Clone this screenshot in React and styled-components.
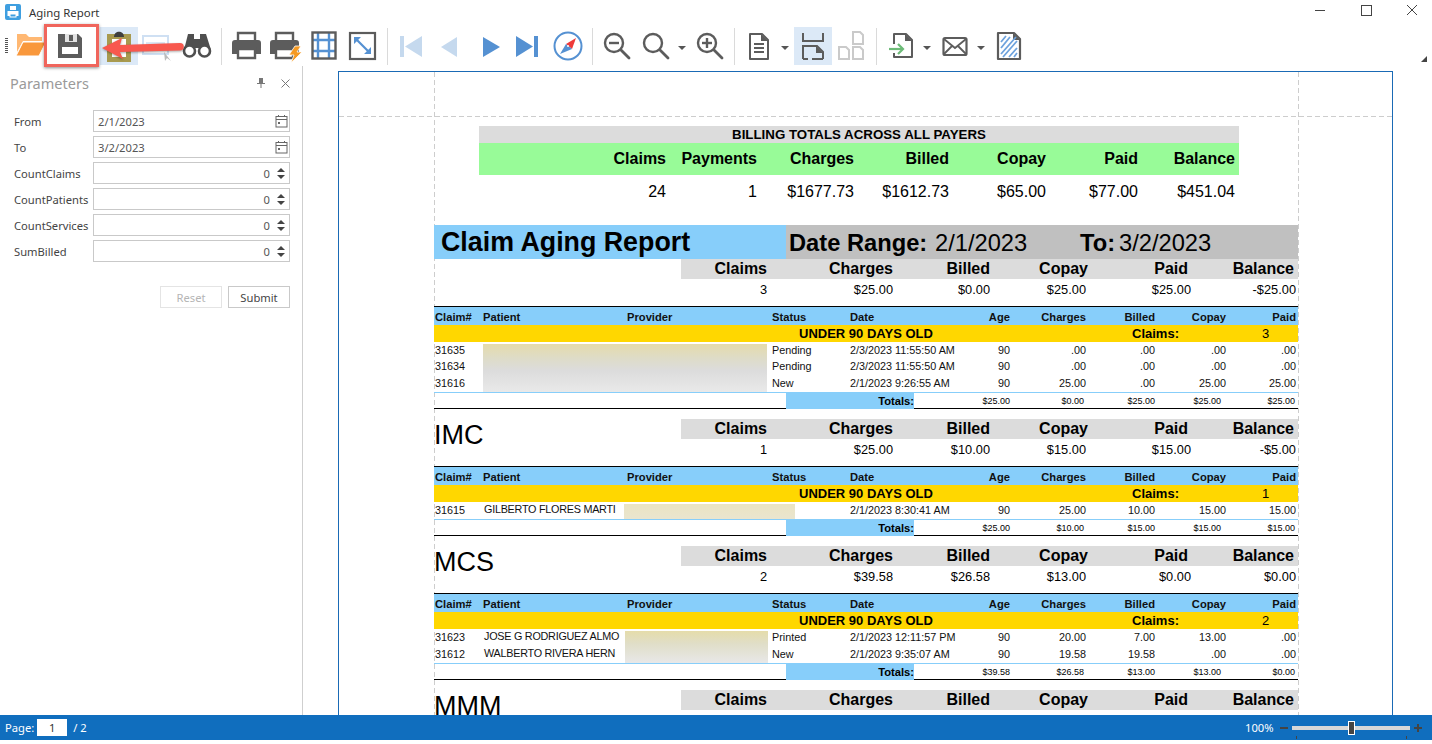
import React from "react";
import styled, { createGlobalStyle, css } from "styled-components";

const GlobalStyle = createGlobalStyle`
  html, body {
    margin: 0;
    padding: 0;
    background: #fff;
    overflow: hidden;
  }
`;

const uiFont = `"Noto Sans", "Open Sans", sans-serif`;
const reportFont = `"Liberation Sans", Arial, sans-serif`;
const dark = "#5c5c5c";
const blue = "#5591d2";
const paleBlue = "#c5d9ee";

const Window = styled.div`
  width: 1432px;
  height: 740px;
  display: flex;
  flex-direction: column;
  font-family: ${uiFont};
  overflow: hidden;
`;

/* title bar */
const TitleBar = styled.div`
  height: 24px;
  display: flex;
  align-items: center;
  padding-left: 5px;
  gap: 8px;
  flex: none;
`;
const TitleText = styled.span`
  font-size: 11.4px;
  color: #333;
`;
const WindowButtons = styled.div`
  margin: 0 -3px 4px auto;
  display: flex;
`;
const WindowButton = styled.div`
  width: 46px;
  height: 20px;
  display: flex;
  align-items: center;
  justify-content: center;
`;

/* toolbar */
const Toolbar = styled.div`
  position: relative;
  height: 42px;
  flex: none;
  display: flex;
  align-items: flex-start;
  padding: 3px 0 0 5px;
  box-sizing: border-box;
`;
const Grip = styled.div`
  width: 3px;
  height: 15px;
  margin-top: 11px;
  background: repeating-linear-gradient(#555 0 1px, #fff 1px 2px);
`;
const ToolButton = styled.div`
  flex: none;
  width: ${(p) => p.$w || 38}px;
  height: 38px;
  margin-left: ${(p) => p.$ml || 0}px;
  display: flex;
  align-items: center;
  justify-content: center;
  position: relative;
  z-index: 1;
  background: ${(p) => (p.$on ? "#dce9f7" : "transparent")};

  svg {
    overflow: visible;
  }
`;
const Separator = styled.div`
  flex: none;
  width: 1px;
  height: 37px;
  margin: 1px 0 0 ${(p) => p.$ml || 0}px;
  background: #dadada;
`;
const Caret = styled.div`
  flex: none;
  width: 0;
  height: 0;
  margin: 19px 2px 0 ${(p) => p.$ml || 0}px;
  border-left: 4px solid transparent;
  border-right: 4px solid transparent;
  border-top: 4px solid #555;
`;
const RedBox = styled.div`
  position: absolute;
  left: 44px;
  top: 0;
  width: 55px;
  height: 43px;
  box-sizing: border-box;
  border: 3px solid #f0655c;
  box-shadow: 0 1px 3px rgba(0, 0, 0, 0.45);
  z-index: 2;
`;
const SaveOverlay = styled.div`
  position: absolute;
  left: 51px;
  top: 3px;
  z-index: 3;
  width: 38px;
  height: 38px;
  display: flex;
  align-items: center;
  justify-content: center;
`;
const ArrowOverlay = styled.svg`
  position: absolute;
  left: 100px;
  top: 12px;
  z-index: 4;
  filter: drop-shadow(0 1px 1px rgba(0, 0, 0, 0.35));
`;
const OverflowMark = styled.div`
  position: absolute;
  right: 5px;
  top: 32px;
  width: 0;
  height: 0;
  border-left: 6px solid transparent;
  border-bottom: 6px solid #444;
`;

const Ico = ({ children }) => (
  <svg width="32" height="32" viewBox="0 0 32 32" fill="none">
    {children}
  </svg>
);

const FolderIcon = () => (
  <Ico>
    <path d="M2 16V4h9l3 3h13v4H8L2 22z" fill="#ffb873" />
    <path d="M8 12h23l-7 14H1z" fill="#f9983c" stroke="#fff" strokeWidth="1" />
  </Ico>
);
const SaveIcon = () => (
  <Ico>
    <path d="M4 4h20l4 4v20H4z" fill={dark} />
    <rect x="11" y="4" width="12" height="8" fill="#e2e2e2" />
    <rect x="15" y="5" width="4" height="6" fill={dark} />
    <rect x="8" y="17" width="16" height="7" fill="#fff" />
  </Ico>
);
const ClipboardIcon = () => (
  <Ico>
    <rect x="6.500" y="6.500" width="19" height="23" fill="#fff" stroke="#a89a50" strokeWidth="5" />
    <path d="M11 7c0-7 10-7 10 0z" fill="#3f3f3f" />
  </Ico>
);
const RectCursorIcon = () => (
  <Ico>
    <rect x="4" y="6" width="25" height="18" fill="#fff" stroke="#cfe0f3" strokeWidth="2" />
    <rect x="7" y="12" width="19" height="3" fill="#dce8f5" />
    <path d="M25 22l1 9 2-3 4 3z" fill="#bbb" />
  </Ico>
);
const BinocularsIcon = () => (
  <Ico>
    <path d="M7 4h6v16H3zM19 4h6l5 16H19z" fill="#4f4f4f" />
    <rect x="12" y="9" width="8" height="9" fill="#4f4f4f" />
    <circle cx="8.500" cy="21" r="5.500" fill="#fff" stroke="#4f4f4f" strokeWidth="2.600" />
    <circle cx="23.500" cy="21" r="5.500" fill="#fff" stroke="#4f4f4f" strokeWidth="2.600" />
  </Ico>
);
const PrintIcon = ({ bolt }) => (
  <Ico>
    <path d="M8 11V3h17v8" stroke={dark} strokeWidth="2.400" />
    <path d="M5 10h23a3 3 0 0 1 3 3v11h-5v-6H7v6H2V13a3 3 0 0 1 3-3z" fill={dark} />
    <path d="M8 19h17v9H8z" stroke={dark} strokeWidth="2.400" fill="#fff" />
    {bolt && <path d="M27 16h6l-4 6h5L23 33l3-8h-5z" fill="#f59a23" stroke="#fff" strokeWidth="0.800" />}
  </Ico>
);
const GridIcon = () => (
  <Ico>
    <path d="M10 3v26M21 3v26M5 10h22M5 21h22" stroke={blue} strokeWidth="2.400" />
    <rect x="4.500" y="2.500" width="23" height="26" stroke={dark} strokeWidth="2.400" />
  </Ico>
);
const FitIcon = () => (
  <Ico>
    <rect x="4" y="3" width="25" height="26" stroke={dark} strokeWidth="2.200" />
    <path d="M9 8l15 15" stroke={blue} strokeWidth="2.200" />
    <path d="M8 7h7l-7 7zM25 24h-7l7-7z" fill={blue} />
  </Ico>
);
const FirstIcon = () => (
  <Ico>
    <rect x="5" y="6" width="4" height="21" fill={paleBlue} />
    <path d="M27 6v21L10 16.500z" fill={paleBlue} />
  </Ico>
);
const PrevIcon = () => (
  <Ico>
    <path d="M24 7v20L8 17z" fill={paleBlue} />
  </Ico>
);
const NextIcon = () => (
  <Ico>
    <path d="M8 7v20l17-10z" fill={blue} />
  </Ico>
);
const LastIcon = () => (
  <Ico>
    <path d="M4 6v21l17-10.500z" fill={blue} />
    <rect x="22" y="6" width="4" height="21" fill={blue} />
  </Ico>
);
const CompassIcon = () => (
  <Ico>
    <circle cx="16" cy="16" r="13.500" stroke={blue} strokeWidth="2" fill="#fff" />
    <path d="M24 8l-4 11-6-5z" fill="#ee3a3a" />
    <path d="M8 24l6-10 6 5z" fill={blue} />
    <circle cx="16" cy="16" r="1" fill="#fff" />
  </Ico>
);
const MagnifierIcon = ({ mark }) => (
  <Ico>
    <circle cx="13" cy="13" r="9" stroke={dark} strokeWidth="2.400" />
    <path d="M20 20l8 8" stroke={dark} strokeWidth="2.800" strokeLinecap="round" />
    {mark && <path d="M8 13h10" stroke={dark} strokeWidth="2.400" />}
    {mark === "plus" && <path d="M13 8v10" stroke={dark} strokeWidth="2.400" />}
  </Ico>
);
const DocIcon = () => (
  <Ico>
    <path d="M7 4h12l6 6v19H7z" stroke={dark} strokeWidth="2" strokeLinejoin="round" />
    <path d="M18 4v7h7z" fill={dark} />
    <path d="M11 14h10M11 18h10M11 22h10" stroke={dark} strokeWidth="1.800" />
  </Ico>
);
const PageBreakIcon = () => (
  <Ico>
    <path d="M6 3v8h20V3" stroke={dark} strokeWidth="2" />
    <path d="M6 29V16h14l6 6v7M6 29h5M15 29h11" stroke={dark} strokeWidth="2" />
    <path d="M19 16v7h7z" fill={dark} />
  </Ico>
);
const MultiPageIcon = () => (
  <Ico>
    <path d="M18 2h7l3 3v9H18zM4 17h7l3 3v9H4zM18 17h7l3 3v9H18z" stroke="#cacaca" strokeWidth="2" />
  </Ico>
);
const ExportIcon = () => (
  <Ico>
    <path d="M9 14V4h12l6 6v17H9v-4" stroke={dark} strokeWidth="2" strokeLinejoin="round" />
    <path d="M20 4v7h7z" fill={dark} />
    <path d="M4 19h14" stroke="#6dbb78" strokeWidth="2.200" />
    <path d="M13 14l5 5-5 5" stroke="#6dbb78" strokeWidth="2.200" />
  </Ico>
);
const MailIcon = () => (
  <Ico>
    <rect x="4.500" y="8" width="23" height="17" rx="1.500" stroke={dark} strokeWidth="2.200" />
    <path d="M5 9l11 9L27 9M5 24l8-8M27 24l-8-8" stroke={dark} strokeWidth="1.800" />
  </Ico>
);
const WatermarkIcon = () => (
  <Ico>
    <path d="M5 3h16l6 6v20H5z" stroke={dark} strokeWidth="2.200" strokeLinejoin="round" />
    <path d="M20 3v7h7z" fill={dark} />
    <path d="M8 12l5-6M8 18l9-11M8 24l15-17M10 27l14-16M16 27l8-9M21 27l3-4" stroke="#6da2dd" strokeWidth="1.800" />
  </Ico>
);

/* body */
const Body = styled.div`
  flex: 1;
  min-height: 0;
  display: flex;
`;

/* parameters panel */
const Panel = styled.aside`
  width: 303px;
  flex: none;
  box-sizing: border-box;
  border-right: 1px solid #cfcfcf;
  padding: 7px 5px 0 10px;
  font-size: 11.2px;
  color: #444;
`;
const PanelHead = styled.div`
  display: flex;
  align-items: center;
  height: 20px;
`;
const PanelTitle = styled.div`
  font-size: 14.500px;
  color: #9a9a9a;
  flex: 1;
`;
const PanelTool = styled.div`
  width: 24px;
  display: flex;
  justify-content: center;
`;
const ParamList = styled.div`
  display: flex;
  flex-direction: column;
  gap: 4px;
  margin: 17px 0 0 4px;
`;
const ParamRow = styled.div`
  display: flex;
  align-items: center;
  height: 22px;
`;
const ParamLabel = styled.label`
  width: 79px;
  flex: none;
  white-space: nowrap;
`;
const ParamBox = styled.div`
  width: 197px;
  height: 22px;
  box-sizing: border-box;
  border: 1px solid #c9c9c9;
  display: flex;
  align-items: center;
  padding: 0 1px 0 4px;
  color: #555;
`;
const ParamValue = styled.span`
  flex: 1;
  text-align: ${(p) => (p.$num ? "right" : "left")};
  padding-right: ${(p) => (p.$num ? "6px" : "0")};
`;
const Spinner = styled.div`
  display: flex;
  flex-direction: column;
  gap: 3px;
  width: 9px;
  align-items: center;
  margin-right: 3px;
`;
const SpinUp = styled.div`
  border-left: 4px solid transparent;
  border-right: 4px solid transparent;
  border-bottom: 4px solid #444;
`;
const SpinDown = styled(SpinUp)`
  border-bottom: 0;
  border-top: 4px solid #444;
`;
const PanelActions = styled.div`
  display: flex;
  justify-content: flex-end;
  gap: 6px;
  margin: 24px 7px 0 0;
`;
const PanelButton = styled.div`
  width: 62px;
  height: 22px;
  box-sizing: border-box;
  display: flex;
  align-items: center;
  justify-content: center;
  border: 1px solid ${(p) => (p.$off ? "#e4e4e4" : "#c9c9c9")};
  color: ${(p) => (p.$off ? "#b5b5b5" : "#444")};
`;

const CalendarIcon = () => (
  <svg width="13" height="14" viewBox="0 0 13 14" fill="none" stroke="#666">
    <rect x="1" y="2.500" width="11" height="10.500" />
    <path d="M1 5.500h11M3.500 1v2M9.500 1v2" />
    <rect x="3" y="8" width="2" height="2" fill="#666" stroke="none" />
  </svg>
);

/* report viewer */
const Viewport = styled.div`
  flex: 1;
  min-width: 0;
  overflow: hidden;
  padding: 5px 0 0 35px;
`;
const Page = styled.div`
  position: relative;
  width: 1055px;
  min-height: 700px;
  box-sizing: border-box;
  border: 1px solid #1a6ab5;
  border-bottom: 0;
  padding: 54px 95px 0 95px;
  font-family: ${reportFont};
  color: #000;
`;
const GuideV = styled.div`
  position: absolute;
  top: 0;
  bottom: 0;
  left: ${(p) => p.$x}px;
  width: 1px;
  background: repeating-linear-gradient(#cdcdcd 0 5px, transparent 5px 8px);
`;
const GuideH = styled.div`
  position: absolute;
  left: 0;
  right: 0;
  top: 44px;
  height: 1px;
  background: repeating-linear-gradient(90deg, #cdcdcd 0 5px, transparent 5px 8px);
`;
const Sheet = styled.div`
  position: relative;
  width: 864px;
`;

const Summary = styled.section`
  width: 760px;
  margin-left: 45px;
`;
const SummaryTitle = styled.div`
  height: 17px;
  line-height: 17px;
  background: #dcdcdc;
  text-align: center;
  font-size: 13.300px;
  font-weight: bold;
`;
const summaryCols = css`
  display: grid;
  grid-template-columns: 187px 91px 97px 95px 97px 92px 97px 4px;
  text-align: right;
  font-size: 16px;
`;
const SummaryHead = styled.div`
  ${summaryCols}
  height: 32px;
  line-height: 32px;
  background: #98fb98;
  font-weight: bold;
`;
const SummaryValues = styled.div`
  ${summaryCols}
  height: 32px;
  line-height: 34px;
`;

const TitleBand = styled.div`
  display: flex;
  height: 34px;
  margin-top: 18px;
  line-height: 34px;
`;
const ReportTitle = styled.h1`
  width: 345px;
  margin: 0;
  padding-left: 7px;
  background: #87cefa;
  font-size: 26.800px;
  font-weight: bold;
`;
const DateBand = styled.div`
  flex: 1;
  display: flex;
  background: #c0c0c0;
  font-size: 23.700px;
  padding-left: 3px;
  line-height: 36px;
`;
const DateLabel = styled.span`
  font-weight: bold;
  width: ${(p) => p.$w}px;
  flex: none;
`;
const DateValue = styled.span`
  width: ${(p) => p.$w}px;
  flex: none;
`;

const Payer = styled.div`
  display: flex;
  margin-top: ${(p) => p.$mt || 0}px;
`;
const PayerName = styled.div`
  width: 247px;
  flex: none;
  font-size: 27px;
  line-height: 32px;
  white-space: nowrap;
`;
const PayerFigures = styled.div`
  flex: 1;
`;
const PayerHead = styled.div`
  display: grid;
  grid-template-columns: 86px 126px 97px 98px 100px 106px 4px;
  height: 20px;
  line-height: 20px;
  background: #dcdcdc;
  text-align: right;
  font-size: 16px;
  font-weight: bold;
`;
const PayerValues = styled.div`
  display: grid;
  grid-template-columns: 86px 126px 97px 96px 105px 105px 2px;
  height: 27px;
  padding-top: 1px;
  box-sizing: border-box;
  line-height: 20px;
  text-align: right;
  font-size: 12.800px;
`;

const columns = css`
  display: grid;
  grid-template-columns: 49px 144px 145px 78px 120px 40px 76px 69px 71px 70px 2px;
`;
const Detail = styled.div`
  border-top: 1px solid #000;
`;
const DetailHead = styled.div`
  ${columns}
  height: 18px;
  line-height: 21px;
  background: #87cefa;
  font-size: 11.200px;
  font-weight: bold;
  color: #111;
`;
const HeadCell = styled.div`
  text-align: ${(p) => (p.$right ? "right" : "left")};
  padding-left: ${(p) => (p.$right ? 0 : p.$pl ?? 0)}px;
`;
const AgeBand = styled.div`
  display: flex;
  height: 17px;
  line-height: 17px;
  padding-left: 365px;
  background: #ffd700;
  font-size: 13px;
`;
const AgeTitle = styled.b`
  width: 333px;
  flex: none;
`;
const AgeLabel = styled.b`
  width: 130px;
  flex: none;
`;
const DetailRows = styled.div`
  position: relative;
  margin-top: 1px;
  border-bottom: 1px solid #87cefa;
`;
const Row = styled.div`
  ${columns}
  height: 16.330px;
  line-height: 15px;
  font-size: 10.800px;
  color: #111;
`;
const Cell = styled.div`
  text-align: ${(p) => (p.$right ? "right" : "left")};
  padding-left: ${(p) => p.$pl || 0}px;
  white-space: nowrap;
`;
const NameCell = styled.div`
  grid-column: span 2;
  padding-left: 1px;
  line-height: 12px;
  font-size: 10.800px;
  letter-spacing: -0.250px;
  white-space: nowrap;
`;
const Blur = styled.div`
  position: absolute;
  top: 1px;
  bottom: 0;
  left: ${(p) => p.$x}px;
  width: ${(p) => p.$w}px;
  background: ${(p) => p.$fill};
  filter: blur(0.600px);
`;
const Totals = styled.div`
  display: grid;
  grid-template-columns: 352px 128px 96px 74px 71px 66px 74px 3px;
  height: 15px;
  line-height: 16px;
  font-size: 9px;
  text-align: right;
  border-bottom: 1px solid #000;
`;
const TotalsLabel = styled.div`
  background: #87cefa;
  font-size: 11.200px;
  font-weight: bold;
`;

/* status bar */
const StatusBar = styled.footer`
  height: 25px;
  flex: none;
  background: #106ebe;
  color: #fff;
  display: flex;
  align-items: center;
  padding-left: 5px;
  font-size: 11.200px;
  position: relative;
  z-index: 5;
`;
const PageInput = styled.div`
  width: 30px;
  height: 17px;
  margin: 0 6px 0 3px;
  background: #fff;
  color: #333;
  text-align: center;
  line-height: 17px;
`;
const Zoom = styled.div`
  margin-left: auto;
  display: flex;
  align-items: center;
  padding-right: 10px;
`;
const ZoomLabel = styled.span`
  width: 30px;
  margin-right: 5px;
`;
const ZoomSign = styled.div`
  width: 8px;
  height: 2px;
  background: #444;
  position: relative;
  ${(p) =>
    p.$plus &&
    css`
      &::after {
        content: "";
        position: absolute;
        left: 3px;
        top: -3px;
        width: 2px;
        height: 8px;
        background: #444;
      }
    `}
`;
const ZoomTrack = styled.div`
  width: 118px;
  height: 4px;
  margin: 0 4px;
  background: #d8d8d8;
  position: relative;

  &::before,
  &::after {
    content: "";
    position: absolute;
    top: 10px;
    width: 1px;
    height: 3px;
    background: #444;
  }
  &::before {
    left: 4px;
  }
  &::after {
    right: 3px;
  }
`;
const ZoomThumb = styled.div`
  position: absolute;
  left: 56px;
  top: -5px;
  width: 7px;
  height: 14px;
  box-sizing: border-box;
  background: #444;
  border: 1px solid #fff;
`;

const params = [
  { label: "From", value: "2/1/2023", date: true },
  { label: "To", value: "3/2/2023", date: true },
  { label: "CountClaims", value: "0" },
  { label: "CountPatients", value: "0" },
  { label: "CountServices", value: "0" },
  { label: "SumBilled", value: "0" },
];

const blurs = {
  wide: "linear-gradient(#e5dbab, #dedcc8 30%, #dcdcdc 55%, #e9e9e9)",
  single: "linear-gradient(#ebe4c2, #e9e5cf)",
  narrow: "linear-gradient(#e5dcaa, #e0dec8 40%, #e8e8e8)",
};

const sections = [
  {
    name: "",
    figures: ["3", "$25.00", "$0.00", "$25.00", "$25.00", "-$25.00"],
    count: "3",
    blur: { x: 49, w: 284, fill: blurs.wide },
    rows: [
      ["31635", "", "Pending", "2/3/2023 11:55:50 AM", "90", ".00", ".00", ".00", ".00"],
      ["31634", "", "Pending", "2/3/2023 11:55:50 AM", "90", ".00", ".00", ".00", ".00"],
      ["31616", "", "New", "2/1/2023 9:26:55 AM", "90", "25.00", ".00", "25.00", "25.00"],
    ],
    totals: ["$25.00", "$0.00", "$25.00", "$25.00", "$25.00"],
  },
  {
    name: "IMC",
    figures: ["1", "$25.00", "$10.00", "$15.00", "$15.00", "-$5.00"],
    count: "1",
    blur: { x: 190, w: 171, fill: blurs.single },
    rows: [["31615", "GILBERTO FLORES MARTI", "", "2/1/2023 8:30:41 AM", "90", "25.00", "10.00", "15.00", "15.00"]],
    totals: ["$25.00", "$10.00", "$15.00", "$15.00", "$15.00"],
  },
  {
    name: "MCS",
    figures: ["2", "$39.58", "$26.58", "$13.00", "$0.00", "$0.00"],
    count: "2",
    blur: { x: 191, w: 143, fill: blurs.narrow },
    rows: [
      ["31623", "JOSE G RODRIGUEZ ALMO", "Printed", "2/1/2023 12:11:57 PM", "90", "20.00", "7.00", "13.00", ".00"],
      ["31612", "WALBERTO RIVERA HERN", "New", "2/1/2023 9:35:07 AM", "90", "19.58", "19.58", ".00", ".00"],
    ],
    totals: ["$39.58", "$26.58", "$13.00", "$13.00", "$0.00"],
  },
];

const payerLabels = ["Claims", "Charges", "Billed", "Copay", "Paid", "Balance"];

function PayerBlock({ name, figures, mt }) {
  return (
    <Payer $mt={mt}>
      <PayerName>{name}</PayerName>
      <PayerFigures>
        <PayerHead>
          {payerLabels.map((l) => (
            <div key={l}>{l}</div>
          ))}
        </PayerHead>
        {figures && (
          <PayerValues>
            {figures.map((f, i) => (
              <div key={i}>{f}</div>
            ))}
          </PayerValues>
        )}
      </PayerFigures>
    </Payer>
  );
}

function Section({ data, first }) {
  return (
    <>
      <PayerBlock name={data.name} figures={data.figures} mt={first ? 0 : 10} />
      <Detail>
        <DetailHead>
          <HeadCell $pl={1}>Claim#</HeadCell>
          <HeadCell>Patient</HeadCell>
          <HeadCell>Provider</HeadCell>
          <HeadCell>Status</HeadCell>
          <HeadCell>Date</HeadCell>
          <HeadCell $right>Age</HeadCell>
          <HeadCell $right>Charges</HeadCell>
          <HeadCell $right>Billed</HeadCell>
          <HeadCell $right>Copay</HeadCell>
          <HeadCell $right>Paid</HeadCell>
        </DetailHead>
        <AgeBand>
          <AgeTitle>UNDER 90 DAYS OLD</AgeTitle>
          <AgeLabel>Claims:</AgeLabel>
          <span>{data.count}</span>
        </AgeBand>
        <DetailRows>
          {data.rows.map((r) => (
            <Row key={r[0]}>
              <Cell $pl={1}>{r[0]}</Cell>
              <NameCell>{r[1]}</NameCell>
              <Cell>{r[2]}</Cell>
              <Cell>{r[3]}</Cell>
              {r.slice(4).map((v, i) => (
                <Cell key={i} $right>
                  {v}
                </Cell>
              ))}
            </Row>
          ))}
          <Blur $x={data.blur.x} $w={data.blur.w} $fill={data.blur.fill} />
        </DetailRows>
        <Totals>
          <div />
          <TotalsLabel>Totals:</TotalsLabel>
          {data.totals.map((t, i) => (
            <div key={i}>{t}</div>
          ))}
        </Totals>
      </Detail>
    </>
  );
}

export default function App() {
  return (
    <Window>
      <GlobalStyle />
      <TitleBar>
        <svg width="16" height="16" viewBox="0 0 16 16">
          <rect width="16" height="16" rx="2" fill="#3f9fe0" />
          <path d="M5 2h6v4H5zM2.500 7h11v5h-11z" fill="#fff" />
          <rect x="5" y="10" width="6" height="3" fill="#3f9fe0" stroke="#fff" />
        </svg>
        <TitleText>Aging Report</TitleText>
        <WindowButtons>
          <WindowButton>
            <svg width="10" height="10">
              <path d="M0 5.500h10" stroke="#444" />
            </svg>
          </WindowButton>
          <WindowButton>
            <svg width="11" height="11">
              <rect x="0.500" y="0.500" width="10" height="10" fill="none" stroke="#444" />
            </svg>
          </WindowButton>
          <WindowButton>
            <svg width="10" height="10">
              <path d="M0 0l10 10M10 0L0 10" stroke="#444" />
            </svg>
          </WindowButton>
        </WindowButtons>
      </TitleBar>

      <Toolbar>
        <Grip />
        <ToolButton $ml={4}><FolderIcon /></ToolButton>
        <ToolButton $ml={1} />
        <ToolButton $ml={11} $on><ClipboardIcon /></ToolButton>
        <ToolButton $w={34}><RectCursorIcon /></ToolButton>
        <ToolButton $ml={6}><BinocularsIcon /></ToolButton>
        <Separator $ml={5} />
        <ToolButton $ml={5}><PrintIcon /></ToolButton>
        <ToolButton><PrintIcon bolt /></ToolButton>
        <ToolButton $ml={2}><GridIcon /></ToolButton>
        <ToolButton><FitIcon /></ToolButton>
        <Separator $ml={6} />
        <ToolButton $ml={4}><FirstIcon /></ToolButton>
        <ToolButton><PrevIcon /></ToolButton>
        <ToolButton $ml={5} $w={36}><NextIcon /></ToolButton>
        <ToolButton><LastIcon /></ToolButton>
        <ToolButton $ml={2}><CompassIcon /></ToolButton>
        <Separator $ml={5} />
        <ToolButton $ml={5}><MagnifierIcon mark="minus" /></ToolButton>
        <ToolButton $ml={1}><MagnifierIcon /></ToolButton>
        <Caret $ml={3} />
        <ToolButton $ml={3}><MagnifierIcon mark="plus" /></ToolButton>
        <Separator $ml={5} />
        <ToolButton $ml={5}><DocIcon /></ToolButton>
        <Caret $ml={3} />
        <ToolButton $ml={3} $on><PageBreakIcon /></ToolButton>
        <ToolButton><MultiPageIcon /></ToolButton>
        <Separator $ml={6} />
        <ToolButton $ml={5}><ExportIcon /></ToolButton>
        <Caret $ml={3} />
        <ToolButton $ml={3}><MailIcon /></ToolButton>
        <Caret $ml={3} />
        <ToolButton $ml={3}><WatermarkIcon /></ToolButton>
        <RedBox />
        <SaveOverlay><SaveIcon /></SaveOverlay>
        <ArrowOverlay width="86" height="24" viewBox="0 0 86 24">
          <path d="M2 12L22 2l-2 7 60-2a3.500 3.500 0 0 1 0 7.500L20 16l3 7z" fill="#f8584e" />
        </ArrowOverlay>
        <OverflowMark />
      </Toolbar>

      <Body>
        <Panel>
          <PanelHead>
            <PanelTitle>Parameters</PanelTitle>
            <PanelTool>
              <svg width="8" height="10" viewBox="0 0 8 10">
                <path d="M2 0h4v5h2v1H4.500v4h-1V6H0V5h2z" fill="#777" />
              </svg>
            </PanelTool>
            <PanelTool>
              <svg width="9" height="9">
                <path d="M0.500 0.500l8 8M8.500 0.500l-8 8" stroke="#777" />
              </svg>
            </PanelTool>
          </PanelHead>
          <ParamList>
            {params.map((p) => (
              <ParamRow key={p.label}>
                <ParamLabel>{p.label}</ParamLabel>
                <ParamBox>
                  <ParamValue $num={!p.date}>{p.value}</ParamValue>
                  {p.date ? (
                    <CalendarIcon />
                  ) : (
                    <Spinner>
                      <SpinUp />
                      <SpinDown />
                    </Spinner>
                  )}
                </ParamBox>
              </ParamRow>
            ))}
          </ParamList>
          <PanelActions>
            <PanelButton $off>Reset</PanelButton>
            <PanelButton>Submit</PanelButton>
          </PanelActions>
        </Panel>

        <Viewport>
          <Page>
            <GuideV $x={95} />
            <GuideV $x={959} />
            <GuideH />
            <Sheet>
              <Summary>
                <SummaryTitle>BILLING TOTALS ACROSS ALL PAYERS</SummaryTitle>
                <SummaryHead>
                  {["Claims", "Payments", "Charges", "Billed", "Copay", "Paid", "Balance"].map((l) => (
                    <div key={l}>{l}</div>
                  ))}
                </SummaryHead>
                <SummaryValues>
                  {["24", "1", "$1677.73", "$1612.73", "$65.00", "$77.00", "$451.04"].map((v, i) => (
                    <div key={i}>{v}</div>
                  ))}
                </SummaryValues>
              </Summary>
              <TitleBand>
                <ReportTitle>Claim Aging Report</ReportTitle>
                <DateBand>
                  <DateLabel $w={146}>Date Range:</DateLabel>
                  <DateValue $w={145}>2/1/2023</DateValue>
                  <DateLabel $w={39}>To:</DateLabel>
                  <DateValue>3/2/2023</DateValue>
                </DateBand>
              </TitleBand>
              {sections.map((s, i) => (
                <Section key={s.name || "all"} data={s} first={i === 0} />
              ))}
              <PayerBlock name="MMM" mt={10} />
            </Sheet>
          </Page>
        </Viewport>
      </Body>

      <StatusBar>
        <span>Page:</span>
        <PageInput>1</PageInput>
        <span>/ 2</span>
        <Zoom>
          <ZoomLabel>100%</ZoomLabel>
          <ZoomSign />
          <ZoomTrack>
            <ZoomThumb />
          </ZoomTrack>
          <ZoomSign $plus />
        </Zoom>
      </StatusBar>
    </Window>
  );
}
